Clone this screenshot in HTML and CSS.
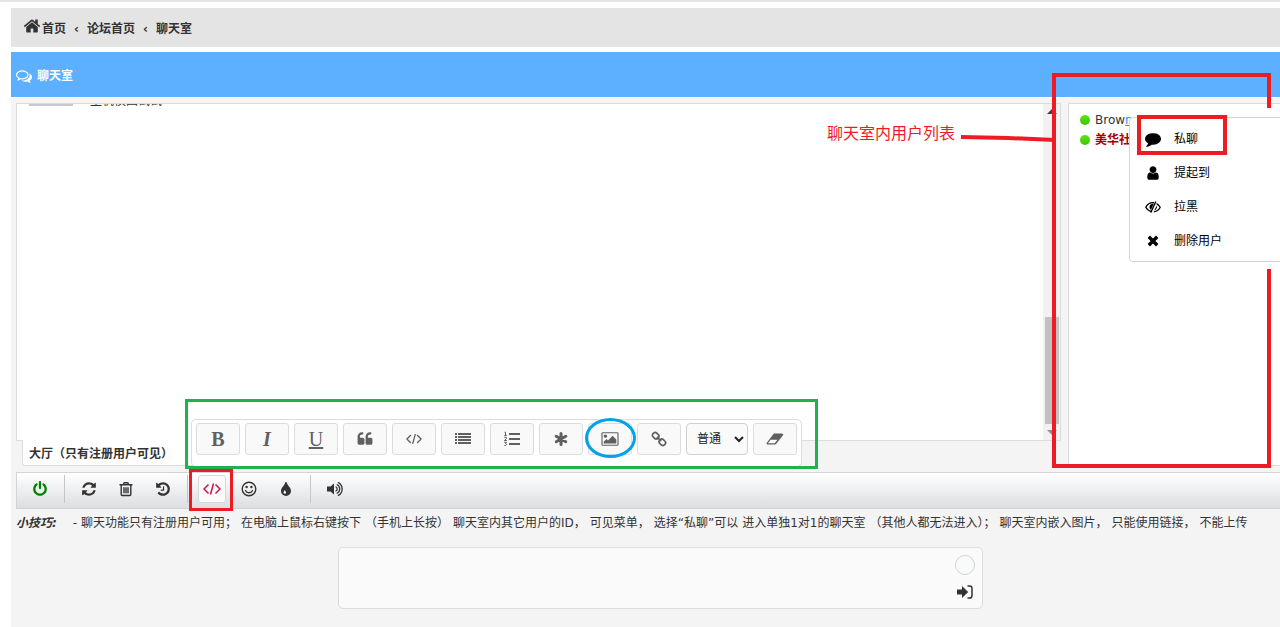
FILE: index.html
```html
<!DOCTYPE html>
<html lang="zh-CN">
<head>
<meta charset="utf-8">
<title>聊天室</title>
<link rel="stylesheet" href="styles.css">
</head>
<body>
<svg class="sprite" aria-hidden="true">
  <symbol id="home" viewBox="0 0 1792 1792"><path d="M1472 992v480q0 26-19 45t-45 19h-384v-384h-256v384h-384q-26 0-45-19t-19-45v-480q0-1 .5-3t.5-3l575-474 575 474q1 2 1 6zm223-69l-62 74q-8 9-21 11h-3q-13 0-21-7l-692-577-692 577q-12 8-24 7-13-2-21-11l-62-74q-8-10-7-23.500t11-21.500l719-599q32-26 76-26t76 26l244 204v-195q0-14 9-23t23-9h192q14 0 23 9t9 23v408l219 182q10 8 11 21.500t-7 23.500z"/></symbol>
  <symbol id="comments" viewBox="0 0 1792 1792"><path d="M704 384q-153 0-286 52t-211.500 141-78.500 191q0 82 53 158t149 132l97 56-35 84q34-20 62-39l44-31 53 10q78 14 153 14 153 0 286-52t211.500-141 78.500-191-78.500-191-211.500-141-286-52zm0-128q191 0 353.500 68.500t256.500 186.500 94 257-94 257-256.500 186.500-353.500 68.500q-86 0-176-16-124 88-278 128-36 9-86 16h-3q-11 0-20.500-8t-11.500-21q-1-3-1-6.500t.5-6.500 2-6l2.500-5 3.500-5.500 4-5 4.500-5 4-4.500q5-6 23-25t26-29.500 22.500-29 25-38.500 20.500-44q-124-72-195-177t-71-224q0-139 94-257t256.500-186.500 353.500-68.500zm822 1169q10 24 20.500 44t25 38.500 22.500 29 26 29.500 23 25q1 1 4 4.500t4.500 5 4 5 3.500 5.500l2.500 5 2 6 .5 6.500-1 6.500q-3 14-13 22t-22 7q-50-7-86-16-154-40-278-128-90 16-176 16-271 0-472-132 58 4 88 4 161 0 309-45t264-129q125-92 192-212t67-254q0-77-23-152 129 71 204 178t75 230q0 120-71 224.500t-195 176.500z"/></symbol>
  <symbol id="power" viewBox="0 0 1792 1792"><path d="M1664 896q0 156-61 298t-164 245-245 164-298 61-298-61-245-164-164-245-61-298q0-182 80.500-343t226.500-270q43-32 95.500-25t83.500 50q32 42 24.500 94.500t-49.500 84.500q-98 74-151.500 181t-53.500 228q0 104 40.500 198.500t109.500 163.500 163.500 109.500 198.500 40.500 198.500-40.500 163.500-109.500 109.500-163.500 40.500-198.500q0-121-53.500-228t-151.500-181q-42-32-49.500-84.500t24.500-94.500q31-43 84-50t95 25q146 109 226.500 270t80.500 343zm-640-768v640q0 52-38 90t-90 38-90-38-38-90v-640q0-52 38-90t90-38 90 38 38 90z"/></symbol>
  <symbol id="refresh" viewBox="0 0 1792 1792"><path d="M1639 1056q0 5-1 7-64 268-268 434.500t-478 166.500q-146 0-282.500-55t-243.500-157l-129 129q-19 19-45 19t-45-19-19-45v-448q0-26 19-45t45-19h448q26 0 45 19t19 45-19 45l-137 137q71 66 161 102t187 36q134 0 250-65t186-179q11-17 53-117 8-23 30-23h192q13 0 22.500 9.500t9.500 22.500zm25-800v448q0 26-19 45t-45 19h-448q-26 0-45-19t-19-45 19-45l138-138q-148-137-349-137-134 0-250 65t-186 179q-11 17-53 117-8 23-30 23h-199q-13 0-22.500-9.500t-9.500-22.500v-7q65-268 270-434.500t480-166.500q146 0 284 55.500t245 156.500l130-129q19-19 45-19t45 19 19 45z"/></symbol>
  <symbol id="trash" viewBox="0 0 16 16"><path d="M1.500 3.800h13M5.500 3.500l.7-1.800h3.600l.7 1.800M3.200 4v9.300c0 .7.400 1.200 1 1.200h7.600c.6 0 1-.5 1-1.200V4M6 6.200v6M8 6.200v6M10 6.200v6" fill="none" stroke="currentColor" stroke-width="1.400"/></symbol>
  <symbol id="history" viewBox="0 0 1792 1792"><path d="M1664 896q0 156-61 298t-164 245-245 164-298 61q-172 0-327-72.500t-264-204.500q-7-10-6.500-22.500t8.500-20.500l137-138q10-9 25-9 16 2 23 12 73 95 179 147t225 52q104 0 198.500-40.500t163.500-109.500 109.500-163.500 40.500-198.500-40.500-198.500-109.500-163.500-163.500-109.500-198.500-40.500q-98 0-188 35.500t-160 101.500l137 138q31 30 14 69-17 40-59 40h-448q-26 0-45-19t-19-45v-448q0-42 40-59 39-17 69 14l130 129q107-101 244.500-156.500t284.500-55.500q156 0 298 61t245 164 164 245 61 298zm-640-288v448q0 14-9 23t-23 9h-320q-14 0-23-9t-9-23v-64q0-14 9-23t23-9h224v-352q0-14 9-23t23-9h64q14 0 23 9t9 23z"/></symbol>
  <symbol id="code" viewBox="0 0 18 16"><path d="M5.500 3.500 1 8l4.500 4.500M12.500 3.500 17 8l-4.500 4.500M10.500 2.500l-3 11" fill="none" stroke="currentColor" stroke-width="1.500"/></symbol>
  <symbol id="smile" viewBox="0 0 16 16"><circle cx="8" cy="8" r="6.800" fill="none" stroke="currentColor" stroke-width="1.400"/><circle cx="5.600" cy="6" r="1.200"/><circle cx="10.400" cy="6" r="1.200"/><path d="M4.500 9.500c1.200 3 5.800 3 7 0" fill="none" stroke="currentColor" stroke-width="1.300" stroke-linecap="round"/></symbol>
  <symbol id="tint" viewBox="0 0 16 16"><path fill-rule="evenodd" d="M8 1c.5 0 .8.300.9.800.9 3.200 4.100 5 4.100 8.200a5 5 0 0 1-10 0c0-3.200 3.200-5 4.100-8.200.1-.5.400-.8.900-.8zM6.600 9.400c-.7.900-1.100 1.400-1.100 2 0 .7.600 1.300 1.300 1.300s1.300-.6 1.300-1.300c0-.7-.6-1.100-1-2-.1-.3-.4-.3-.5 0z"/></symbol>
  <symbol id="volume" viewBox="0 0 18 16"><path d="M8 2.500v11L4.500 10.500H1v-5h3.500z"/><path d="M10 6c1.600.8 1.600 3.200 0 4M11.200 3.800c3.400 1.800 3.400 6.600 0 8.400M12.400 1.600c5 2.800 5 10 0 12.800" fill="none" stroke="currentColor" stroke-width="1.300" stroke-linecap="round"/></symbol>
  <symbol id="quote" viewBox="0 0 1792 1792"><path d="M832 960v384q0 80-56 136t-136 56h-384q-80 0-136-56t-56-136v-704q0-104 40.500-198.500t109.500-163.500 163.500-109.500 198.500-40.500h64q26 0 45 19t19 45v128q0 26-19 45t-45 19h-64q-106 0-181 75t-75 181v32q0 40 28 68t68 28h224q80 0 136 56t56 136z"/><path d="M1728 960v384q0 80-56 136t-136 56h-384q-80 0-136-56t-56-136v-704q0-104 40.500-198.500t109.500-163.500 163.500-109.500 198.500-40.500h64q26 0 45 19t19 45v128q0 26-19 45t-45 19h-64q-106 0-181 75t-75 181v32q0 40 28 68t68 28h224q80 0 136 56t56 136z"/></symbol>
  <symbol id="list" viewBox="0 0 16 16"><path d="M0 2h2v2H0zM0 5h2v2H0zM0 8h2v2H0zM0 11h2v2H0zM3 2h13v2H3zM3 5h13v2H3zM3 8h13v2H3zM3 11h13v2H3z"/></symbol>
  <symbol id="numbers" viewBox="0 0 16 16"><path d="M5 2h11v2H5zM5 7h11v2H5zM5 12h11v2H5z"/><path d="M.5 1.200h1V4.500M.3 4.500h2.400M.3 6.300h2v1.500l-2 1.700h2.500M.3 11.300h2.200l-1 1.300c1.600.2 1.400 2.200-1.200 2" fill="none" stroke="currentColor"/></symbol>
  <symbol id="asterisk" viewBox="0 0 16 16"><path d="M8 2.500v11M3.200 5.200l9.600 5.600M12.800 5.200l-9.600 5.600" stroke="currentColor" stroke-width="3" stroke-linecap="round"/></symbol>
  <symbol id="image" viewBox="-64 0 1920 1792"><path d="M576 576q0 80-56 136t-136 56-136-56-56-136 56-136 136-56 136 56 56 136zm1024 384v448h-1408v-192l320-320 160 160 512-512zm96-704h-1600q-13 0-22.500 9.500t-9.500 22.500v1216q0 13 9.500 22.500t22.500 9.500h1600q13 0 22.500-9.500t9.500-22.500v-1216q0-13-9.500-22.500t-22.500-9.500zm160 32v1216q0 66-47 113t-113 47h-1600q-66 0-113-47t-47-113v-1216q0-66 47-113t113-47h1600q66 0 113 47t47 113z"/></symbol>
  <symbol id="link" viewBox="0 0 16 16"><g fill="none" stroke="currentColor" stroke-width="1.700" transform="rotate(45 8 8)"><rect x="0" y="5.400" width="6.600" height="5.200" rx="2.200"/><rect x="9.400" y="5.400" width="6.600" height="5.200" rx="2.200"/><path d="M5 8h6"/></g></symbol>
  <symbol id="eraser" viewBox="0 0 18 16"><path fill-rule="evenodd" d="M8.200 2.500H16c1 0 1.600 1 1 1.800l-6.700 8.500c-.3.400-.6.700-1.200.7H1.800c-1 0-1.600-1-1-1.800l6.500-8.500c.3-.4.500-.7.900-.7zM4.600 8.800 2 12.300h6.700l2.800-3.500z"/></symbol>
  <symbol id="comment" viewBox="0 0 1792 1792"><path d="M1792 896q0 174-120 321.500t-326 233-450 85.500q-70 0-145-8-198 175-460 225-49 14-114 22-17 2-30.500-9t-17.500-29v-1q-3-4-.5-12t2-10 4.500-9.500l6-9 7-8.500 8-9q7-8 31-34.500t34.500-38 31-39.500 32.500-51 27-59 26-76q-157-89-247.500-220t-90.500-281q0-130 71-248.500t191-204.500 286-136.500 348-50.500 348 50.500 286 136.500 191 204.500 71 248.500z"/></symbol>
  <symbol id="user" viewBox="0 0 1792 1792"><path d="M1536 1399q0 109-62.500 187t-150.500 78h-854q-88 0-150.500-78t-62.500-187q0-85 8.500-160.500t31.500-152 58.500-131 94-89 134.500-34.500q131 128 313 128t313-128q76 0 134.500 34.500t94 89 58.500 131 31.500 152 8.500 160.500zm-256-887q0 159-112.500 271.500t-271.500 112.500-271.500-112.500-112.500-271.500 112.500-271.500 271.500-112.500 271.500 112.500 112.500 271.500z"/></symbol>
  <symbol id="hide" viewBox="0 0 16 16"><path d="M6.500 12.500C4 12 2 10.500.8 8.300 2.200 5.500 4.800 3.700 8 3.700h1M11.500 4.600c1.600.8 2.800 2 3.700 3.700-1.300 2.600-3.600 4.200-6.400 4.500" fill="none" stroke="currentColor" stroke-width="1.300"/><path d="M10.800 2.500 5.800 13.500" stroke="currentColor" stroke-width="1.400"/><path d="M8.800 4.600 6 10.800C3.300 9 4.200 4.600 8.800 4.600zM11.800 6.500c.6 2.300-.4 4.200-2.500 5z"/></symbol>
  <symbol id="times" viewBox="0 0 16 16"><path d="m3.800 3.800 8.400 8.400M12.200 3.800l-8.400 8.400" stroke="currentColor" stroke-width="3.400"/></symbol>
  <symbol id="enter" viewBox="0 0 16 16"><path d="M0 5.500h5V2l6.200 6L5 14v-3.500H0z"/><path d="M10.500 2h2.300A2.200 2.200 0 0 1 15 4.200v7.600a2.200 2.200 0 0 1-2.200 2.200h-2.300" fill="none" stroke="currentColor" stroke-width="1.500"/></symbol>
</svg>

<div class="page">
  <nav class="crumbs" aria-label="导航">
    <a class="crumb" href="#"><svg class="icon"><use href="#home"/></svg>首页</a>
    <span class="chevron">‹</span>
    <a class="crumb" href="#">论坛首页</a>
    <span class="chevron">‹</span>
    <a class="crumb" href="#">聊天室</a>
  </nav>

  <h1 class="title"><svg class="icon"><use href="#comments"/></svg>聊天室</h1>

  <main class="chat">
    <div class="panels">
      <div class="room">
        <section class="log" aria-label="消息">
          <div class="messages">
            <div class="message"><span class="avatar"></span><p class="message-text">主机模回试试</p></div>
          </div>
          <div class="scrollbar"><span class="arrow arrow-up"></span><span class="thumb"></span><span class="arrow arrow-down"></span></div>
        </section>
        <button class="tab" type="button">大厅（只有注册用户可见）</button>
      </div>

      <aside class="users">
        <ul class="user-list">
          <li class="user-row"><span class="dot"></span><span>Brow<a class="user-link" href="#">n</a></span></li>
          <li class="user-row admin"><span class="dot"></span><span>美华社</span></li>
        </ul>
        <div class="menu">
          <button class="menu-item" type="button"><svg class="icon"><use href="#comment"/></svg>私聊</button>
          <button class="menu-item" type="button"><svg class="icon"><use href="#user"/></svg>提起到</button>
          <button class="menu-item" type="button"><svg class="icon"><use href="#hide"/></svg>拉黑</button>
          <button class="menu-item" type="button"><svg class="icon"><use href="#times"/></svg>删除用户</button>
        </div>
        <svg class="mark mark-users" viewBox="0 0 320 400" aria-hidden="true">
          <path d="M318 35V2H103v391h215V196" stroke-width="4"/>
          <path d="M10 64l47 1 47 2" stroke-width="4"/>
          <rect x="188" y="44" width="86" height="36" stroke-width="4"/>
        </svg>
        <p class="note">聊天室内用户列表</p>
      </aside>
    </div>

    <div class="toolbar">
      <button class="tool power" type="button" aria-label="退出"><svg class="icon"><use href="#power"/></svg></button>
      <span class="rule"></span>
      <button class="tool" type="button" aria-label="刷新"><svg class="icon"><use href="#refresh"/></svg></button>
      <button class="tool" type="button" aria-label="清除"><svg class="icon"><use href="#trash"/></svg></button>
      <button class="tool" type="button" aria-label="历史"><svg class="icon"><use href="#history"/></svg></button>
      <span class="rule"></span>
      <button class="tool active" type="button" aria-label="BBCode"><svg class="icon wide"><use href="#code"/></svg></button>
      <button class="tool" type="button" aria-label="表情"><svg class="icon"><use href="#smile"/></svg></button>
      <button class="tool" type="button" aria-label="颜色"><svg class="icon"><use href="#tint"/></svg></button>
      <span class="rule"></span>
      <button class="tool" type="button" aria-label="声音"><svg class="icon wide"><use href="#volume"/></svg></button>

      <div class="editor">
        <button class="format letter" type="button"><b>B</b></button>
        <button class="format letter" type="button"><i>I</i></button>
        <button class="format letter" type="button"><u>U</u></button>
        <button class="format" type="button" aria-label="引用"><svg class="icon"><use href="#quote"/></svg></button>
        <button class="format" type="button" aria-label="代码"><svg class="icon"><use href="#code"/></svg></button>
        <button class="format" type="button" aria-label="列表"><svg class="icon"><use href="#list"/></svg></button>
        <button class="format" type="button" aria-label="编号列表"><svg class="icon"><use href="#numbers"/></svg></button>
        <button class="format" type="button" aria-label="列表项"><svg class="icon"><use href="#asterisk"/></svg></button>
        <button class="format" type="button" aria-label="图片"><svg class="icon wide"><use href="#image"/></svg></button>
        <button class="format" type="button" aria-label="链接"><svg class="icon"><use href="#link"/></svg></button>
        <select class="size" aria-label="字号"><option>普通</option></select>
        <button class="format" type="button" aria-label="清除格式"><svg class="icon wide"><use href="#eraser"/></svg></button>
      </div>
      <span class="frame frame-editor"></span>
      <span class="frame frame-code"></span>
      <span class="frame frame-image"></span>
    </div>

    <p class="tips">
      <strong class="tips-label">小技巧:</strong>
      <span>- 聊天功能只有注册用户可用；</span><span>在电脑上鼠标右键按下</span><span>（手机上长按）</span><span>聊天室内其它用户的ID，</span><span>可见菜单，</span><span>选择“私聊”可以</span><span>进入单独1对1的聊天室</span><span>（其他人都无法进入）；</span><span>聊天室内嵌入图片，</span><span>只能使用链接，</span><span>不能上传</span>
    </p>

    <form class="composer">
      <textarea class="composer-text" aria-label="消息内容"></textarea>
      <div class="composer-side">
        <span class="counter"></span>
        <button class="send" type="button" aria-label="发送"><svg class="icon"><use href="#enter"/></svg></button>
      </div>
    </form>
  </main>
</div>
</body>
</html>
```
FILE: styles.css
```css
* { box-sizing: border-box; }

body {
  margin: 0;
  min-height: 100vh;
  display: flex;
  flex-direction: column;
  border-top: 2px solid #e4e4e4;
  background: #fff;
  color: #333;
  font: 12px/20px "DejaVu Sans", "Noto Sans CJK SC", sans-serif;
  overflow-x: hidden;
}

button, select, textarea { font: inherit; color: inherit; }
button { border: 0; padding: 0; background: none; }
a { color: inherit; text-decoration: none; }
p, ul, h1 { margin: 0; padding: 0; }

.sprite { position: absolute; width: 0; height: 0; }
.icon { width: 16px; height: 16px; flex: none; fill: currentColor; }
.wide { width: 18px; }

.page {
  flex: 1;
  display: flex;
  flex-direction: column;
  gap: 5px;
  padding: 6px 0 0 11px;
}

.crumbs {
  display: flex;
  align-items: center;
  gap: 7px;
  height: 39px;
  padding: 2px 0 0 12px;
  background: #e4e4e4;
  font-weight: bold;
}
.crumb { display: flex; align-items: center; gap: 1px; }
.crumb .icon { width: 18px; height: 18px; margin-bottom: 5px; }
.chevron { padding: 0 1px; }

.title {
  display: flex;
  align-items: center;
  gap: 5px;
  height: 45px;
  padding: 2px 0 0 5px;
  background: #5cb0ff;
  color: #fff;
  font-size: 12px;
}

.chat {
  flex: 1;
  margin-top: -4px;
  padding: 5px 0 16px 5px;
  background: #f4f4f4;
}

.panels { display: flex; gap: 7px; height: 363px; }
.room { flex: 1; min-width: 0; display: flex; flex-direction: column; align-items: flex-start; }
.log {
  flex: 1;
  align-self: stretch;
  min-height: 0;
  display: flex;
  border: 1px solid #dcdcdc;
  background: #fff;
  overflow: hidden;
}
.messages { flex: 1; padding-left: 12px; overflow: hidden; }
.message { display: flex; gap: 17px; margin-top: -13px; }
.avatar { width: 44px; height: 15px; background: #c4c8d4; }

.scrollbar {
  width: 17px;
  display: flex;
  flex-direction: column;
  align-items: center;
  padding: 5px 1px;
  background: #f1f1f1;
}
.arrow { border: 5px solid transparent; }
.arrow-up { border-top-width: 0; border-bottom-color: #404040; }
.arrow-down { margin-top: 6px; border-bottom-width: 0; border-top-color: #909090; }
.thumb { width: 14px; height: 107px; margin-top: auto; background: #c1c1c1; }

.tab {
  width: 180px;
  height: 26px;
  margin: -1px 0 0 6px;
  padding: 2px 6px 0;
  border: 1px solid #dcdcdc;
  border-top: 0;
  border-radius: 0 0 3px 3px;
  background: #fff;
  font-weight: bold;
  text-align: left;
  white-space: nowrap;
}

.users {
  position: relative;
  width: 212px;
  border: 1px solid #dcdcdc;
  border-right: 0;
  background: #fff;
}
.user-list { padding: 6px 0 0 11px; list-style: none; }
.user-row { display: flex; align-items: center; gap: 5px; white-space: nowrap; }
.dot { width: 10px; height: 10px; border-radius: 50%; background: linear-gradient(#60e610, #3cc400); }
.admin { color: #a00; font-weight: bold; }
.user-link { color: #3b8ef0; text-decoration: underline; }

.menu {
  position: absolute;
  top: 13px;
  left: 60px;
  right: -6px;
  padding: 4px 0 3px;
  border: 1px solid #d4d4d4;
  border-radius: 4px;
  background: #fff;
}
.menu-item {
  display: flex;
  align-items: center;
  gap: 13px;
  width: 100%;
  height: 34px;
  padding-left: 15px;
  color: #000;
}

.mark { position: absolute; fill: none; stroke: #ed1c24; }
.mark-users { top: -31px; left: -118px; width: 320px; height: 400px; }
.note {
  position: absolute;
  top: 18px;
  left: -242px;
  color: #ed1c24;
  font-size: 16px;
  line-height: 24px;
}

.toolbar {
  position: relative;
  display: flex;
  align-items: center;
  gap: 9px;
  height: 37px;
  margin-top: 6px;
  padding: 0 0 3px 9px;
  border: 1px solid #d4d4d4;
  border-right: 0;
  background: linear-gradient(#fff, #dcdee2);
}
.tool { display: grid; place-items: center; width: 28px; height: 28px; }
.power { color: #008000; }
.active { border: 1px solid #d8d8d8; border-radius: 3px; background: #fafafa; color: #d31141; }
.rule { width: 1px; height: 28px; margin: 0 1px; background: #c4c6ca; }

.editor {
  position: absolute;
  top: -54px;
  left: 174px;
  display: flex;
  gap: 5px;
  padding: 3px 4px 11px;
  border: 1px solid #dcdcdc;
  border-radius: 5px;
  background: #fff;
}
.format {
  display: grid;
  place-items: center;
  width: 44px;
  height: 32px;
  border: 1px solid #dcdcdc;
  border-radius: 3px;
  background: #f9f9f9;
  color: #606060;
}
.letter { font: 20px/24px "Liberation Serif", serif; }
.letter i { font-weight: bold; }
.size {
  width: 62px;
  height: 32px;
  padding-left: 6px;
  border: 1px solid #d0d0d0;
  border-radius: 4px;
  background: #fafafa;
  color: #222;
}

.frame { position: absolute; border: 3px solid #ed1c24; }
.frame-editor { top: -74px; left: 168px; width: 633px; height: 70px; border-color: #22b14c; }
.frame-code { top: -4px; left: 172px; width: 44px; height: 42px; }
.frame-image { top: -55px; left: 568px; width: 51px; height: 40px; border-color: #00a2e8; border-radius: 50%; }

.tips {
  display: flex;
  gap: 4px;
  margin-top: 4px;
  white-space: nowrap;
}
.tips-label { font-style: italic; margin-right: 12px; }

.composer {
  display: flex;
  width: 51%;
  height: 62px;
  margin: 14px 297px 0 auto;
  padding: 7px;
  border: 1px solid #dcdcdc;
  border-radius: 5px;
  background: #fafafa;
}
.composer-text { flex: 1; border: 0; outline: 0; resize: none; background: none; }
.composer-side {
  display: flex;
  flex-direction: column;
  align-items: center;
  justify-content: space-between;
  width: 20px;
}
.counter { width: 20px; height: 20px; border: 1px solid #ccd6dd; border-radius: 50%; }
.send { height: 18px; display: grid; place-items: center; }
```
